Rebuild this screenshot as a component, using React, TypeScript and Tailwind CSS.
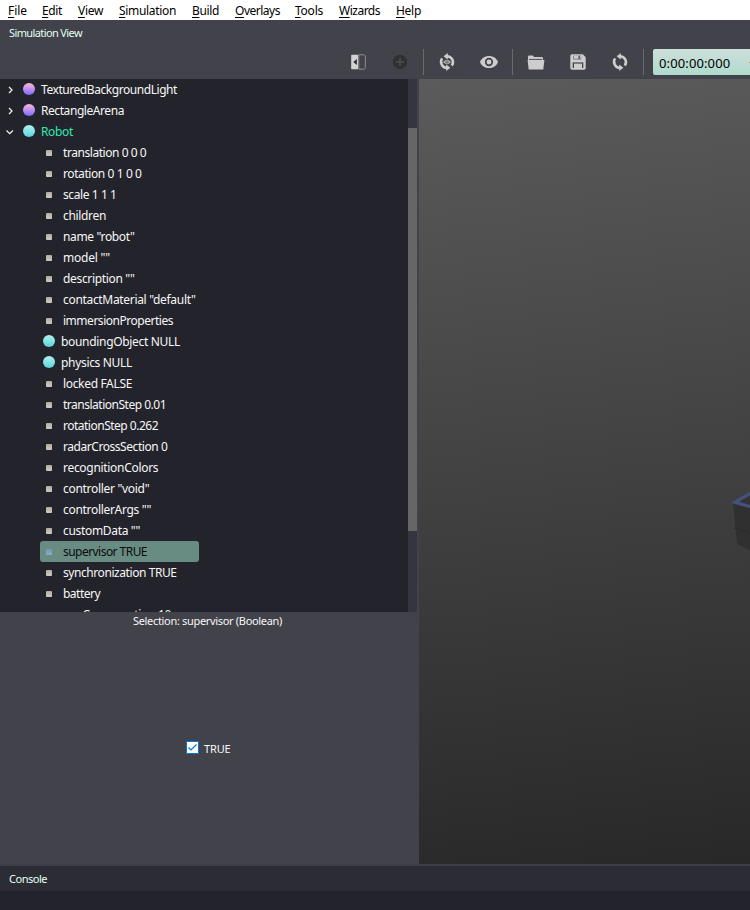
import { useLayoutEffect, useRef, type ReactNode } from "react";

// A label whose tracking is adjusted so that it fills a known width.
function Label({ w, className = "", children }: { w: number; className?: string; children: ReactNode }) {
  const ref = useRef<HTMLSpanElement>(null);
  useLayoutEffect(() => {
    const el = ref.current;
    if (!el) return;
    el.style.letterSpacing = "0px";
    const natural = el.getBoundingClientRect().width;
    el.style.letterSpacing = `${(w - natural) / (el.textContent || " ").length}px`;
  }, [w]);
  return (
    <span ref={ref} className={`inline-block whitespace-pre ${className}`}>
      {children}
    </span>
  );
}

const menus: [string, number, string][] = [
  ["File", 19, "mr-[15px]"],
  ["Edit", 20, "mr-4"],
  ["View", 25, "mr-4"],
  ["Simulation", 57, "mr-4"],
  ["Build", 27, "mr-4"],
  ["Overlays", 45, "mr-[15px]"],
  ["Tools", 28, "mr-4"],
  ["Wizards", 41, "mr-4"],
  ["Help", 25, ""],
];

type Field = { text: string; w: number; node?: boolean; selected?: boolean };
const fields: Field[] = [
  { text: "translation 0 0 0", w: 83.3 },
  { text: "rotation 0 1 0 0", w: 78.5 },
  { text: "scale 1 1 1", w: 53.5 },
  { text: "children", w: 43 },
  { text: 'name "robot"', w: 71.5 },
  { text: 'model ""', w: 47 },
  { text: 'description ""', w: 71.5 },
  { text: 'contactMaterial "default"', w: 132.5 },
  { text: "immersionProperties", w: 110 },
  { text: "boundingObject NULL", w: 119, node: true },
  { text: "physics NULL", w: 71, node: true },
  { text: "locked FALSE", w: 69 },
  { text: "translationStep 0.01", w: 103 },
  { text: "rotationStep 0.262", w: 95 },
  { text: "radarCrossSection 0", w: 104.3 },
  { text: "recognitionColors", w: 95.3 },
  { text: 'controller "void"', w: 86.3 },
  { text: 'controllerArgs ""', w: 88 },
  { text: 'customData ""', w: 77 },
  { text: "supervisor TRUE", w: 84, selected: true },
  { text: "synchronization TRUE", w: 113.5 },
  { text: "battery", w: 37 },
];

function TopNode({ text, w, open, robot }: { text: string; w: number; open?: boolean; robot?: boolean }) {
  return (
    <div className="flex h-[21px] items-center pl-[5px]">
      <svg className="size-[10px] shrink-0" viewBox="0 0 10 10" fill="none" stroke="#eeeeee" strokeWidth="1.3">
        <path d={open ? "M1.5 3.5 4.7 6.7 7.9 3.5" : "M4 2 7 5 4 8"} />
      </svg>
      <span
        className={`mb-px ml-2 size-3 shrink-0 rounded-full bg-linear-to-b ${
          robot ? "from-[#b4eeee] to-[#4fd6d9]" : "from-[#ffb5d6] to-[#8064ff]"
        }`}
      />
      <Label w={w} className={robot ? "ml-[6px] text-[#2fe9b1]" : "ml-[6px]"}>
        {text}
      </Label>
    </div>
  );
}

function FieldRow({ text, w, node, selected }: Field) {
  return (
    <div
      className={`ml-10 flex h-[21px] shrink-0 items-center ${
        selected ? "w-[159px] rounded-[3px] bg-[#688c82] text-[#0b0b0b]" : ""
      }`}
    >
      {node ? (
        <span className="mb-px ml-[3px] size-3 rounded-full bg-linear-to-b from-[#b4eeee] to-[#4fd6d9]" />
      ) : (
        <span
          className={`mr-[3px] ml-[6px] size-[6px] rounded-[1px] bg-linear-to-b ${
            selected ? "from-[#7597ae] to-[#8cabc0]" : "from-[#b1ad9f] to-[#cdcdc6]"
          }`}
        />
      )}
      <Label w={w} className={node ? "ml-[6px]" : "ml-2"}>
        {text}
      </Label>
    </div>
  );
}

const Separator = () => <span className="h-[26px] w-px bg-[#6c6c70]" />;

// Two circling arrows, shared by the reset and reload buttons.
function Arrows() {
  return (
    <>
      <path d="M9 3.2A6 6 0 0 1 13.9 12.6M9 14.8A6 6 0 0 1 4.1 5.4" fill="none" stroke="#cdcdcd" strokeWidth="2.5" />
      <path d="M9.8 0v6.4L5.6 3.2zM8.2 11.6V18l4.2-3.2z" fill="#cdcdcd" />
    </>
  );
}

function Toolbar() {
  return (
    <div className="flex h-[39px] items-center pb-[1px] pl-[350px]">
      <svg className="h-4 w-4" viewBox="0 0 16 16">
        <path d="M2 .8H8v14.4H2A.8.8 0 0 1 1.2 14.4V1.6A.8.8 0 0 1 2 .8z" fill="#d2d2d2" />
        <path d="M6.8 5v6L3.4 8z" fill="#25252b" />
        <path d="M8.8.8h4.8c1 0 1.7.7 1.7 1.7v11c0 1-.7 1.7-1.7 1.7H8.8z" fill="none" stroke="#929294" />
      </svg>
      <svg className="ml-[26px] size-4" viewBox="0 0 16 16">
        <circle cx="8" cy="8" r="7.2" fill="#303030" />
        <path d="M8 4v8M4 8h8" stroke="#47474e" strokeWidth="1.8" />
      </svg>
      <span className="ml-[15px] flex"><Separator /></span>
      <svg className="ml-[14px] size-[18px]" viewBox="0 0 18 18">
        <Arrows />
        <path d="M5.6 9Q9 5.4 12.4 9 9 12.6 5.6 9z" fill="#a9a9ab" stroke="#cdcdcd" strokeWidth=".8" />
        <circle cx="9" cy="9" r="1.2" fill="none" stroke="#5a5a60" strokeWidth=".8" />
      </svg>
      <svg className="ml-6 h-[14px] w-[18px]" viewBox="0 0 18 14">
        <path d="M0 7C3-1 15-1 18 7 15 15 3 15 0 7z" fill="#cdcdcd" />
        <circle cx="9" cy="7" r="3.3" fill="none" stroke="#42424a" strokeWidth="1.7" />
      </svg>
      <span className="ml-[14px] flex"><Separator /></span>
      <svg className="ml-[14px] h-[15px] w-[18px]" viewBox="0 0 18 15">
        <path d="M1 5V1.8Q1 .5 2.3.5h3.3L7.2 2h7.6q1.2 0 1.2 1.2V5" fill="#cdcdcd" />
        <path d="M.6 5h16.8L16.3 14.4H1.7z" fill="#cdcdcd" />
        <path d="M2 4.4h13.2" stroke="#505057" />
      </svg>
      <svg className="ml-[25px] size-4" viewBox="0 0 16 16">
        <path
          d="M2 .3h10.8l2.9 2.9V14q0 1.7-1.7 1.7H2Q.3 15.7.3 14V2Q.3.3 2 .3z"
          fill="#cdcdcd"
        />
        <path d="M3.4 1.6h7.8v3.8H3.4z" fill="#55555c" />
        <path d="M4 1.6h4.4v3.2H4zM9.9 1.6h1v3.2h-1z" fill="#cdcdcd" />
        <path d="M2.7 8.4h10.6v5.6H2.7z" fill="#42424a" />
        <path d="M4 9.6h8v4.4H4z" fill="#cdcdcd" />
      </svg>
      <svg className="ml-[25px] size-[18px]" viewBox="0 0 18 18">
        <Arrows />
      </svg>
      <span className="ml-[14px] flex"><Separator /></span>
      <div className="ml-[9px] flex h-[26px] flex-1 items-center justify-between overflow-hidden rounded-l-[2px] bg-linear-to-b from-[#cde0db] to-[#b0dacd] pt-[2px] pl-[6px] text-[13px] text-black">
        <Label w={71.3}>0:00:00:000</Label>
        <span className="mb-px h-px w-px bg-[#c79150]" />
      </div>
    </div>
  );
}

export default function App() {
  return (
    <div className="flex h-[910px] w-[750px] flex-col overflow-hidden bg-[#42424a] font-['Noto_Sans','Segoe_UI',sans-serif] text-[12px] leading-[21px] text-[#f7f7f7]">
      <nav className="flex h-5 shrink-0 items-center bg-white pl-2 text-black">
        {menus.map(([text, w, gap]) => (
          <Label key={text} w={w} className={gap}>
            <span className="underline underline-offset-2">{text[0]}</span>
            {text.slice(1)}
          </Label>
        ))}
      </nav>
      <div className="h-5 shrink-0 pt-[2px] pl-[9px] text-[11px] text-[#e0fff4]">
        <Label w={73}>Simulation View</Label>
      </div>
      <div className="flex h-[39px] shrink-0 flex-col justify-center pt-[6px]">
        <Toolbar />
      </div>
      <main className="flex h-[785px] shrink-0">
        <aside className="flex w-[419px] shrink-0 flex-col">
          <div className="flex h-[533px] shrink-0">
            <div className="h-[533px] w-[408px] overflow-hidden bg-[#23232b]">
              <TopNode text="TexturedBackgroundLight" w={136} />
              <TopNode text="RectangleArena" w={83} />
              <TopNode text="Robot" w={32} open robot />
              {fields.map((f) => (
                <FieldRow key={f.text} {...f} />
              ))}
              <div className="h-[21px] pl-[63px]">
                <Label w={108}>cpuConsumption 10</Label>
              </div>
            </div>
            <div className="w-[9px] bg-[#353541] pt-[49px]">
              <div className="h-[403px] bg-[#666666]" />
            </div>
          </div>
          <div className="h-[18px] pl-[133px] text-[11px] leading-[18px]">
            <Label w={149}>Selection: supervisor (Boolean)</Label>
          </div>
          <div className="flex flex-1 items-center pt-[2px] pl-[186px]">
            <svg className="mb-[2px] size-[13px]" viewBox="0 0 13 13">
              <path d="M.5.5h12v12H.5z" fill="#fff" stroke="#0078d7" />
              <path d="M2.5 6.5 5 9l5.5-5.5" fill="none" stroke="#0078d7" strokeWidth="1.2" />
            </svg>
            <Label w={26.5} className="ml-[5px] text-[11px]">TRUE</Label>
          </div>
        </aside>
        <section className="flex flex-1 items-start justify-end bg-[linear-gradient(173deg,#5b5b5b_0%,#282828_100%)] pt-[411px]">
          <svg className="h-[62px] w-[18px]" viewBox="0 0 18 62">
            <path d="M1 14 18 18V60L5 54z" fill="#303030" />
            <path d="M2 38 18 43" stroke="#2b2b2b" />
            <path d="M7 12 18 6V15z" fill="#343434" />
            <path d="M18 3.2 3 12.3 18 16.6" fill="none" stroke="#44527e" strokeWidth="3" />
          </svg>
        </section>
      </main>
      <footer className="flex flex-1 flex-col border-t-2 border-[#3e3e46] bg-[#23232b]">
        <div className="h-[25px] bg-[#2c2c34] pl-[9px] text-[11px] leading-[26px] text-[#e7fff6]">
          <Label w={38}>Console</Label>
        </div>
      </footer>
    </div>
  );
}
